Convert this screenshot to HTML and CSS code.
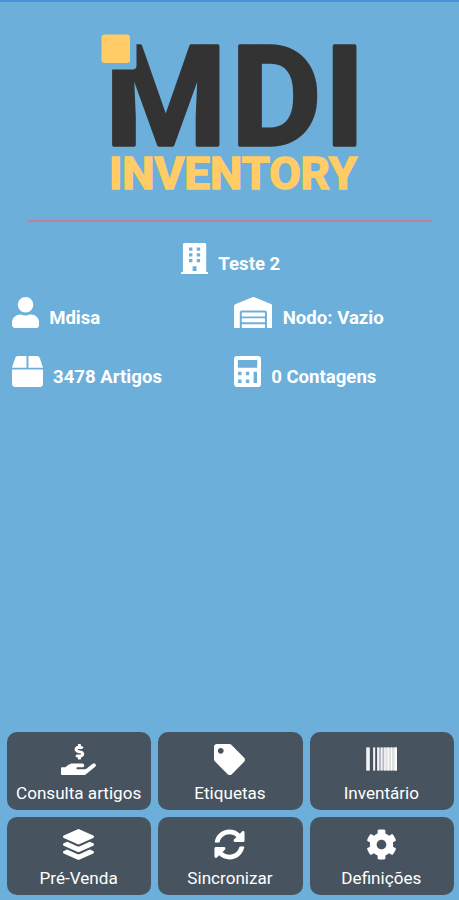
FILE: index.html
```html
<!DOCTYPE html>
<html lang="pt">
<head>
  <meta charset="UTF-8" />
  <meta name="viewport" content="width=device-width, initial-scale=1.0"/>
  <title>MDI Inventory</title>
  <link rel="stylesheet" href="styles.css">
</head>
<body>

  <!-- Logo -->
  <header>
    <svg class="logo" viewBox="0 0 260 160" role="img" aria-label="MDI Inventory">
      <text class="logo-mdi" x="4.9 130.9 224.3" y="114.5">MDI</text>
      <path class="logo-cut" d="M0 0H36.5V35.5Q36.5 39.5 32.5 39.5H0Z"/>
      <rect class="logo-square" x="1.5" y="4.5" width="28.5" height="28.5" rx="3"/>
      <text class="logo-name" x="9" y="159" textLength="248" lengthAdjust="spacingAndGlyphs">INVENTORY</text>
    </svg>
  </header>

  <hr class="divider">

  <!-- Session info -->
  <main>
    <div class="info company">
      <svg class="icon" viewBox="0 0 448 512"><path fill-rule="evenodd" d="M436 480h-20V24c0-13-11-24-24-24H56C43 0 32 11 32 24v456H12c-7 0-12 5-12 12v20h448v-20c0-7-5-12-12-12zM132 74h56v52h-56zM260 74h56v52h-56zM132 170h56v52h-56zM260 170h56v52h-56zM132 266h56v52h-56zM260 266h56v52h-56zM192 384h64v80h-64z"/></svg>
      <span>Teste 2</span>
    </div>
    <div class="info-grid">
      <div class="info">
        <svg class="icon" viewBox="0 0 448 512"><path d="M224 256c70.7 0 128-57.3 128-128S294.7 0 224 0 96 57.3 96 128s57.3 128 128 128zm89.6 32h-16.7c-22.2 10.2-46.9 16-72.9 16s-50.6-5.8-72.9-16h-16.7C60.2 288 0 348.2 0 422.4V464c0 26.5 21.5 48 48 48h352c26.5 0 48-21.5 48-48v-41.6c0-74.2-60.2-134.4-134.4-134.4z"/></svg>
        <span>Mdisa</span>
      </div>
      <div class="info">
        <svg class="icon" viewBox="0 0 640 512"><path d="M504 352H136.4c-4.4 0-8 3.6-8 8l-.1 48c0 4.4 3.6 8 8 8H504c4.4 0 8-3.6 8-8v-48c0-4.4-3.6-8-8-8zm0 96H136.1c-4.4 0-8 3.6-8 8l-.1 48c0 4.4 3.6 8 8 8h368c4.4 0 8-3.6 8-8v-48c0-4.4-3.6-8-8-8zm0-192H136.6c-4.4 0-8 3.6-8 8l-.1 48c0 4.4 3.6 8 8 8H504c4.4 0 8-3.6 8-8v-48c0-4.4-3.6-8-8-8zm106.5-139L338.4 3.7a48.15 48.15 0 0 0-36.9 0L29.5 117C11.7 124.5 0 141.9 0 161.3V504c0 4.4 3.6 8 8 8h80c4.4 0 8-3.6 8-8V256c0-17.6 14.6-32 32.6-32h382.8c18 0 32.6 14.4 32.6 32v248c0 4.4 3.6 8 8 8h80c4.4 0 8-3.6 8-8V161.3c0-19.4-11.7-36.8-29.5-44.3z"/></svg>
        <span>Nodo: Vazio</span>
      </div>
      <div class="info">
        <svg class="icon" viewBox="0 0 512 512"><path d="M509.5 184.6L458.9 32.8C452.4 13.2 434.1 0 413.4 0H272v192h238.7c-.4-2.5-.4-5-1.2-7.4zM240 0H98.6c-20.7 0-39 13.2-45.5 32.8L2.5 184.6c-.8 2.4-.8 4.9-1.2 7.4H240V0zM0 224v240c0 26.5 21.5 48 48 48h416c26.5 0 48-21.5 48-48V224H0z"/></svg>
        <span>3478 Artigos</span>
      </div>
      <div class="info">
        <svg class="icon" viewBox="0 0 448 512"><path fill-rule="evenodd" d="M48 0h352c26 0 48 22 48 48v416c0 26-22 48-48 48H48c-26 0-48-22-48-48V48C0 22 22 0 48 0zM64 64v128h320V64zM68 260v56h56v-56zM196 260v56h56v-56zM68 388v56h56v-56zM196 388v56h56v-56zM324 260v184h56V260z"/></svg>
        <span>0 Contagens</span>
      </div>
    </div>
  </main>

  <!-- Menu -->
  <nav class="menu">
    <button class="menu-btn">
      <svg class="icon" viewBox="0 0 576 512"><path d="M271.06 144.3l54.27 14.3a8.59 8.59 0 0 1 6.63 8.1c0 4.6-4.09 8.4-9.12 8.4h-35.6a30 30 0 0 1-11.19-2.2c-5.24-2.2-11.28-1.7-15.3 2l-19 17.5a11.68 11.68 0 0 0-2.25 2.66 11.42 11.42 0 0 0 3.88 15.74 83.77 83.77 0 0 0 34.51 11.5V240c0 8.8 7.83 16 17.37 16h17.37c9.55 0 17.38-7.2 17.38-16v-17.6c32.93-3.6 57.84-31 53.5-63-3.15-23-22.46-41.3-46.56-47.7L282.68 97.4a8.59 8.59 0 0 1-6.63-8.1c0-4.6 4.09-8.4 9.12-8.4h35.6A30 30 0 0 1 332 83.1c5.23 2.2 11.28 1.7 15.3-2l19-17.5a11.31 11.31 0 0 0 2.17-2.6 11.43 11.43 0 0 0-3.84-15.78 83.82 83.82 0 0 0-34.52-11.5V16c0-8.8-7.82-16-17.37-16h-17.37C285.82 0 278 7.2 278 16v17.6c-32.89 3.6-57.85 31-53.51 63 3.14 23 22.51 41.3 46.57 47.7zM565.3 328.1c-11.8-10.7-30.2-10-42.6 0L430.3 402c-11.3 9.1-25.4 14-40 14H272c-8.8 0-16-7.2-16-16s7.2-16 16-16h78.3c15.9 0 30.7-10.9 33.3-26.6 3.3-20-12.1-37.4-31.6-37.4H192c-27 0-53.1 9.3-74.1 26.3L71.4 384H16c-8.8 0-16 7.2-16 16v96c0 8.8 7.2 16 16 16h356.8c14.5 0 28.6-4.9 40-14L564 377c15.2-12.1 16.4-35.3 1.3-48.9z"/></svg>
      <span>Consulta artigos</span>
    </button>
    <button class="menu-btn">
      <svg class="icon" viewBox="0 0 512 512"><path d="M0 252.118V48C0 21.49 21.49 0 48 0h204.118a48 48 0 0 1 33.941 14.059l211.882 211.882c18.745 18.745 18.745 49.137 0 67.882L293.823 497.941c-18.745 18.745-49.137 18.745-67.882 0L14.059 286.059A48 48 0 0 1 0 252.118zM112 64c-26.51 0-48 21.49-48 48s21.49 48 48 48 48-21.49 48-48-21.49-48-48-48z"/></svg>
      <span>Etiquetas</span>
    </button>
    <button class="menu-btn">
      <svg class="icon" viewBox="0 0 31 31">
        <path opacity=".55" d="M0 3.5h31v23H18V3.5h-5v23h-2V3.5H9v23H7V3.5H4v23H0z"/>
        <path opacity=".6" d="M12 3.5h19v23H12z"/>
        <path opacity=".85" d="M.5 3.5h3v23h-3zM7.3 3.5h1.9v23H7.3zM11.2 3.5h1.6v23h-1.6zM15 3.5h1.4v23H15zM18.5 3.5h1v23h-1zM21.5 3.5h1.4v23h-1.4zM25 3.5h1v23h-1zM28.5 3.5H31v23h-2.5z"/>
      </svg>
      <span>Inventário</span>
    </button>
    <button class="menu-btn">
      <svg class="icon" viewBox="0 0 512 512"><path d="M12.41 148.02l232.94 105.67c6.8 3.09 14.49 3.09 21.29 0l232.94-105.67c16.55-7.51 16.55-32.52 0-40.03L266.65 2.31a25.607 25.607 0 0 0-21.29 0L12.41 107.98c-16.55 7.51-16.55 32.53 0 40.04zm487.18 88.28l-58.09-26.33-161.64 73.27c-7.56 3.43-15.59 5.17-23.86 5.17s-16.29-1.74-23.86-5.17L70.51 209.97l-58.1 26.33c-16.55 7.5-16.55 32.5 0 40l232.94 105.59c6.8 3.08 14.49 3.08 21.29 0L499.59 276.3c16.55-7.5 16.55-32.5 0-40zm0 127.8l-57.87-26.23-161.86 73.37c-7.56 3.43-15.59 5.17-23.86 5.17s-16.29-1.74-23.86-5.17L70.29 337.87 12.41 364.1c-16.55 7.5-16.55 32.5 0 40l232.94 105.59c6.8 3.08 14.49 3.08 21.29 0L499.59 404.1c16.55-7.5 16.55-32.5 0-40z"/></svg>
      <span>Pré-Venda</span>
    </button>
    <button class="menu-btn">
      <svg class="icon" viewBox="0 0 512 512"><path d="M370.72 133.28C339.458 104.008 298.888 87.962 255.848 88c-77.458.068-144.328 53.178-162.791 126.85-1.344 5.363-6.122 9.15-11.651 9.15H24.103c-7.498 0-13.194-6.807-11.807-14.176C33.933 94.924 134.813 8 256 8c66.448 0 126.791 26.136 171.315 68.685L463.03 40.97C478.149 25.851 504 36.559 504 57.941V192c0 13.255-10.745 24-24 24H345.941c-21.382 0-32.09-25.851-16.971-40.971l41.75-41.749zM32 296h134.059c21.382 0 32.09 25.851 16.971 40.971l-41.75 41.75c31.262 29.273 71.835 45.319 114.876 45.28 77.418-.07 144.315-53.144 162.787-126.849 1.344-5.363 6.122-9.15 11.651-9.15h57.304c7.498 0 13.194 6.807 11.807 14.176C478.067 417.076 377.187 504 256 504c-66.448 0-126.791-26.136-171.315-68.685L48.97 471.03C33.851 486.149 8 475.441 8 454.059V320c0-13.255 10.745-24 24-24z"/></svg>
      <span>Sincronizar</span>
    </button>
    <button class="menu-btn">
      <svg class="icon" viewBox="0 0 512 512"><path d="M487.4 315.7l-42.6-24.6c4.3-23.2 4.3-47 0-70.2l42.6-24.6c4.9-2.8 7.1-8.6 5.5-14-11.1-35.6-30-67.8-54.7-94.6-3.8-4.1-10-5.1-14.8-2.3L380.8 110c-17.9-15.4-38.5-27.3-60.8-35.1V25.8c0-5.6-3.9-10.5-9.4-11.7-36.7-8.2-74.3-7.8-109.2 0-5.5 1.2-9.4 6.1-9.4 11.7V75c-22.2 7.9-42.8 19.8-60.8 35.1L88.7 85.5c-4.9-2.8-11-1.9-14.8 2.3-24.7 26.7-43.6 58.9-54.7 94.6-1.7 5.4.6 11.2 5.5 14L67.3 221c-4.3 23.2-4.3 47 0 70.2l-42.6 24.6c-4.9 2.8-7.1 8.6-5.5 14 11.1 35.6 30 67.8 54.7 94.6 3.8 4.1 10 5.1 14.8 2.3l42.6-24.6c17.9 15.4 38.5 27.3 60.8 35.1v49.2c0 5.6 3.9 10.5 9.4 11.7 36.7 8.2 74.3 7.8 109.2 0 5.5-1.2 9.4-6.1 9.4-11.7v-49.2c22.2-7.9 42.8-19.8 60.8-35.1l42.6 24.6c4.9 2.8 11 1.9 14.8-2.3 24.7-26.7 43.6-58.9 54.7-94.6 1.5-5.5-.7-11.3-5.6-14.1zM256 336c-44.1 0-80-35.9-80-80s35.9-80 80-80 80 35.9 80 80-35.9 80-80 80z"/></svg>
      <span>Definições</span>
    </button>
  </nav>

</body>
</html>
```
FILE: styles.css
```css
* {
  box-sizing: border-box;
}

body {
  margin: 0;
  height: 100vh;
  display: flex;
  flex-direction: column;
  background: #6cafdb;
  border-top: 2px solid #4792db;
  font-family: Roboto, sans-serif;
  color: #fff;
}

header {
  padding: 28px 0 0 100px;
}

.logo {
  display: block;
  width: 260px;
  height: 160px;
  overflow: visible;
}

.logo-mdi {
  font-size: 139px;
  font-weight: 700;
  fill: #333;
  stroke: #333;
  stroke-width: 3.4px;
  stroke-linejoin: round;
}

.logo-cut {
  fill: #6cafdb;
}

.logo-square {
  fill: #ffcc66;
}

.logo-name {
  font-size: 45px;
  font-weight: 700;
  fill: #ffcc66;
  stroke: #ffcc66;
  stroke-width: 1.6px;
}

.divider {
  width: 404px;
  height: 2px;
  margin: 30px 0 0 28px;
  border: 0;
  background: #c77c98;
}

main {
  flex: 1;
  padding-top: 21px;
}

.icon {
  display: block;
  height: 31px;
  fill: currentColor;
}

.info {
  display: flex;
  align-items: flex-start;
  gap: 10.5px;
  height: 31px;
  font-size: 18.6px;
  font-weight: 700;
  line-height: 22px;
}

.info span {
  padding-top: 10px;
}

.company {
  justify-content: center;
  padding-left: 2px;
}

.info-grid {
  display: grid;
  grid-template-columns: 222px 1fr;
  row-gap: 28px;
  padding: 23px 0 0 11.5px;
}

.menu {
  display: grid;
  grid-template-columns: repeat(3, 1fr);
  grid-auto-rows: 78px;
  gap: 7px;
  padding: 0 5px 5px 7px;
}

.menu-btn {
  display: flex;
  flex-direction: column;
  align-items: center;
  gap: 8px;
  padding: 12px 1px 0 0;
  border: 0;
  border-radius: 10px;
  background: #475460;
  color: #fff;
  font-family: inherit;
  font-size: 17.1px;
  line-height: 21px;
  white-space: nowrap;
}
```
